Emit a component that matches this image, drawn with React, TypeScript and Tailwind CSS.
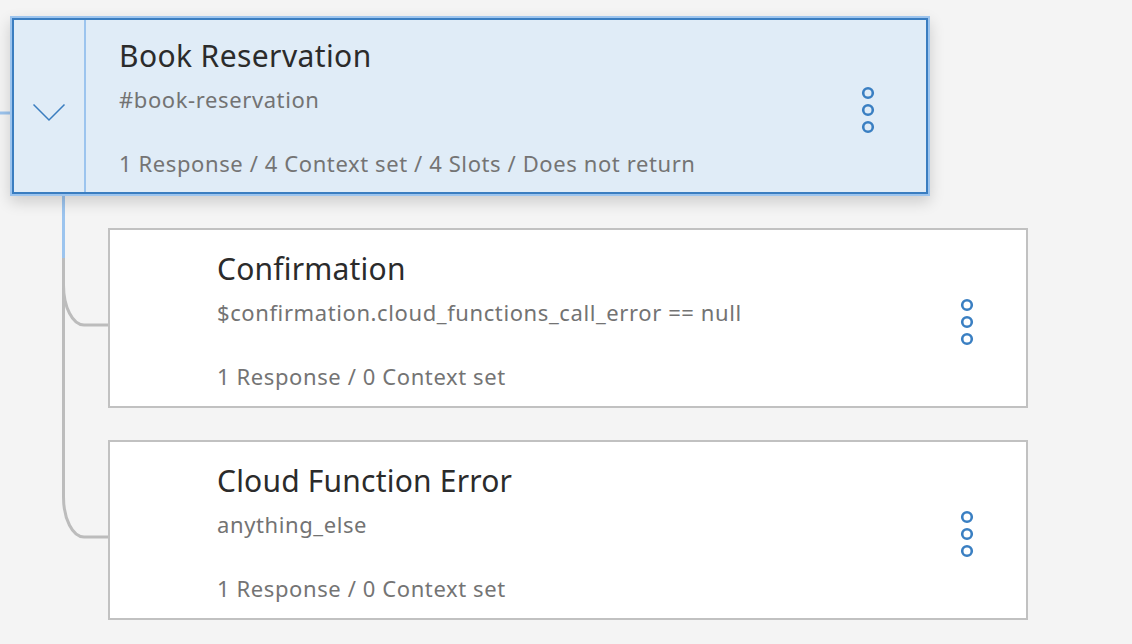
import React from 'react';

// Dialog tree: a selected parent node with two child nodes hanging off it.

const FONT = { fontFamily: '"Noto Sans", "Open Sans", Arial, sans-serif' };

function Chevron() {
  return (
    <svg width="34" height="19" viewBox="0 0 34 19" fill="none">
      <path d="M1.5 1.5 L17 17 L32.5 1.5" stroke="#3a7dc0" strokeWidth="1.5" />
    </svg>
  );
}

function Kebab() {
  return (
    <svg width="14" height="48" viewBox="0 0 14 48" fill="none">
      <circle cx="7" cy="7" r="4.8" stroke="#3a7fc2" strokeWidth="2.6" />
      <circle cx="7" cy="24" r="4.8" stroke="#3a7fc2" strokeWidth="2.6" />
      <circle cx="7" cy="41" r="4.8" stroke="#3a7fc2" strokeWidth="2.6" />
    </svg>
  );
}

interface NodeProps {
  title: string;
  condition: string;
  summary: string;
}

function ChildNode({ title, condition, summary }: NodeProps) {
  return (
    <div className="w-[920px] h-[180px] border-2 border-[#c1c1c1] bg-white flex">
      <div className="flex-1 flex flex-col pl-[107px] pt-[22px] pb-[17px]">
        <div className="text-[30px] leading-[34px] tracking-[0.2px] text-[#2b2b2b]">{title}</div>
        <div className="mt-[13px] text-[22px] leading-[26px] tracking-[0.6px] text-[#737373]">{condition}</div>
        <div className="mt-auto text-[22px] leading-[26px] tracking-[0.6px] text-[#747474]">{summary}</div>
      </div>
      <div className="flex items-center mr-[52px] mt-2">
        <Kebab />
      </div>
    </div>
  );
}

export default function App() {
  return (
    <div className="relative w-full h-[644px] bg-[#f4f4f4] overflow-hidden" style={FONT}>
      {/* connector lines */}
      <svg className="absolute inset-0 pointer-events-none" width="1132" height="644" fill="none">
        <path d="M0 113 H12" stroke="#9cc4ee" strokeWidth="3" />
        <path d="M63.5 196 V258" stroke="#9cc4ee" strokeWidth="3" />
        <path d="M63.5 258 V497 A20.5 40 0 0 0 84 537 H108" stroke="#bcbcbc" strokeWidth="3" />
        <path d="M63.5 285 A20.5 40 0 0 0 84 325 H108" stroke="#bcbcbc" strokeWidth="3" />
      </svg>

      <div className="relative pt-4 pl-[10px]">
        {/* selected parent node */}
        <div className="w-[920px] h-[180px] border-2 border-[#9cc4ee] bg-[#e0ecf7] shadow-[0_6px_14px_rgba(0,0,0,0.16)]">
          <div className="h-full border-2 border-[#3a7dc0] flex">
            <div className="w-[72px] border-r-2 border-[#9cc4ee] flex items-center justify-center pt-3">
              <Chevron />
            </div>
            <div className="flex-1 flex flex-col pl-[33px] pt-[19px] pb-[16px]">
              <div className="text-[30px] leading-[34px] tracking-[0.4px] text-[#2b2b2b]">Book Reservation</div>
              <div className="mt-[13px] text-[22px] leading-[26px] tracking-[0.6px] text-[#737373]">#book-reservation</div>
              <div className="mt-auto text-[22px] leading-[26px] tracking-[0.6px] text-[#747474]">
                1 Response / 4 Context set / 4 Slots / Does not return
              </div>
            </div>
            <div className="flex items-center mr-[51px] mt-2">
              <Kebab />
            </div>
          </div>
        </div>

        <div className="ml-[98px] mt-8 flex flex-col gap-8">
          <ChildNode
            title="Confirmation"
            condition="$confirmation.cloud_functions_call_error == null"
            summary="1 Response / 0 Context set"
          />
          <ChildNode
            title="Cloud Function Error"
            condition="anything_else"
            summary="1 Response / 0 Context set"
          />
        </div>
      </div>
    </div>
  );
}
